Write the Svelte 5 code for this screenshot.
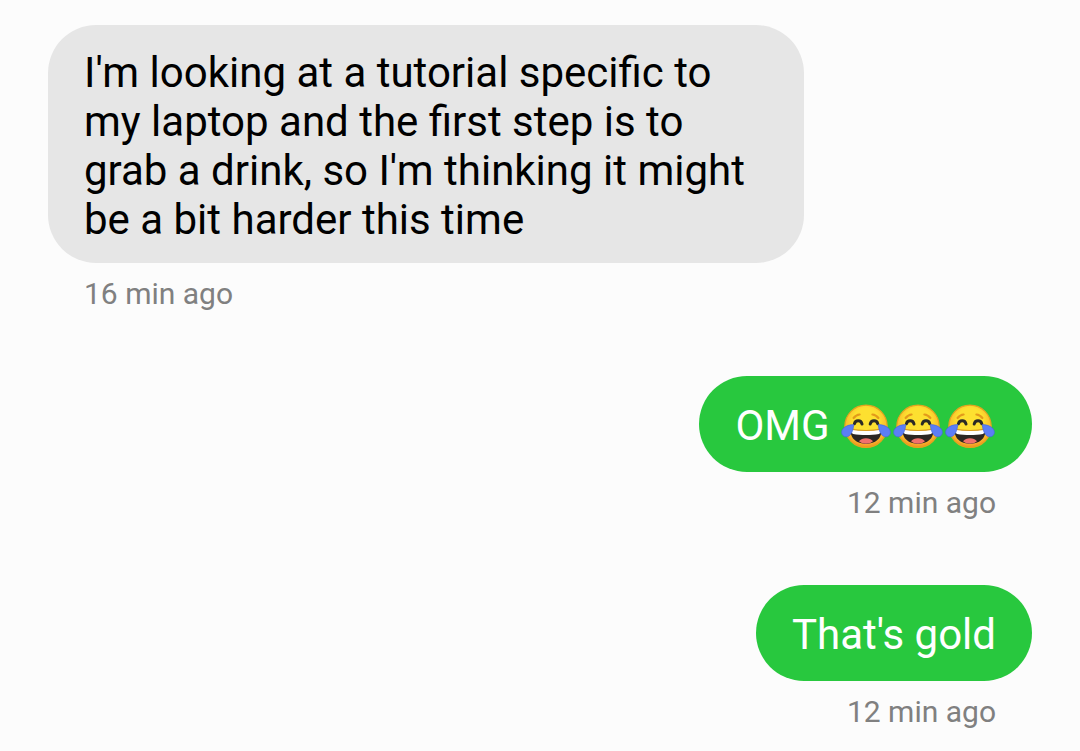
<script>
	const messages = [
		{
			from: 'them',
			text: "I'm looking at a tutorial specific to my laptop and the first step is to grab a drink, so I'm thinking it might be a bit harder this time",
			joy: 0,
			time: '16 min ago'
		},
		{ from: 'me', text: 'OMG', joy: 3, time: '12 min ago' },
		{ from: 'me', text: "That's gold", joy: 0, time: '12 min ago' }
	];
</script>

<svelte:head>
	<title>Messages</title>
</svelte:head>

{#snippet joyFace(i)}
	<svg class="emoji" viewBox="0 0 52 52" role="img" aria-label="face with tears of joy">
		<defs>
			<radialGradient id="skin-{i}" cx="0.5" cy="0.38" r="0.62">
				<stop offset="0.5" stop-color="#fde030" />
				<stop offset="0.85" stop-color="#f9b42b" />
				<stop offset="1" stop-color="#f08a22" />
			</radialGradient>
		</defs>
		<circle cx="26" cy="25.3" r="21.2" fill="url(#skin-{i})" stroke="#e3a41e" stroke-width="1.2" />
		<g fill="none" stroke-linecap="round" stroke-linejoin="round">
			<path d="M13.6 17c1.6-2.100 3.600-3.300 6-3.500M38.400 17c-1.600-2.100-3.600-3.300-6-3.500" stroke="#e39a1b" stroke-width="2.2" />
			<path d="M14.400 22.800c1-4 6.600-4 7.600.2M30.200 23c1-4.200 6.600-4.200 7.600-.2" stroke="#2b2a26" stroke-width="3" />
		</g>
		<path d="M10.600 29.600h30.800c.3 7.800-6 13.300-15.400 13.300S10.300 37.400 10.600 29.600z" fill="#2b2622" />
		<path d="M19 40.300c1.600-2.100 4-3 7-3s5.400.9 7 3c-1.900 1.700-4.400 2.500-7 2.500s-5.100-.8-7-2.500z" fill="#f0706c" />
		<path d="M10.800 28.300c4.900.8 9.900 1.200 15.200 1.200s10.300-.4 15.200-1.200c.1 2.600-.8 4.200-2.300 4.600-8 1.400-17.800 1.400-25.800 0-1.500-.4-2.400-2-2.300-4.600z" fill="#fff" />
		<path d="M10.800 28.200c4.900.9 9.900 1.300 15.200 1.300s10.300-.4 15.200-1.300" fill="none" stroke="#dc9c1e" stroke-width="1.2" />
		<g fill="#5c7ef6" stroke="#4668dc" stroke-width="0.7">
			<path d="M13.700 23.600c-3.800 0-7.700 1.100-10.300 3.600-2.200 2.200-2.300 5.500-.4 7.400 2 1.900 5.300 1.500 7.300-.9 2.200-2.700 3.200-6.300 3.400-10.100z" />
			<path d="M38.300 23.600c3.800 0 7.700 1.100 10.300 3.600 2.200 2.200 2.300 5.500.4 7.400-2 1.900-5.300 1.500-7.300-.9-2.200-2.700-3.200-6.300-3.400-10.100z" />
		</g>
	</svg>
{/snippet}

<main>
	{#each messages as message}
		<article class={message.from}>
			<p class="bubble">
				{message.text}
				{#if message.joy}
					<span class="faces">
						{#each { length: message.joy }, i}{@render joyFace(i)}{/each}
					</span>
				{/if}
			</p>
			<time>{message.time}</time>
		</article>
	{/each}
</main>

<style>
	:global(body) {
		background: #fcfcfc;
	}

	main {
		display: flex;
		flex-direction: column;
		gap: 65px;
		padding: 25px 48px 22px;
		font-family: Roboto, sans-serif;
	}

	article {
		display: flex;
		flex-direction: column;
		align-items: flex-start;
		gap: 13px;
	}

	.me {
		align-items: flex-end;
	}

	.bubble {
		box-sizing: border-box;
		max-width: 70vw;
		margin: 0;
		padding: 23px 36px 19px;
		border-radius: 48px;
		background: #e6e6e6;
		color: #000;
		font-size: 42px;
		line-height: 49px;
	}

	.me .bubble {
		padding: 25px 36px 22px;
		background: #28c83e;
		color: #fff;
	}

	.faces {
		display: inline-flex;
		height: 49px;
		vertical-align: top;
	}

	.emoji {
		width: 52px;
		height: 52px;
	}

	time {
		padding: 0 36px;
		color: #808080;
		font-size: 30px;
		line-height: 35px;
	}
</style>
